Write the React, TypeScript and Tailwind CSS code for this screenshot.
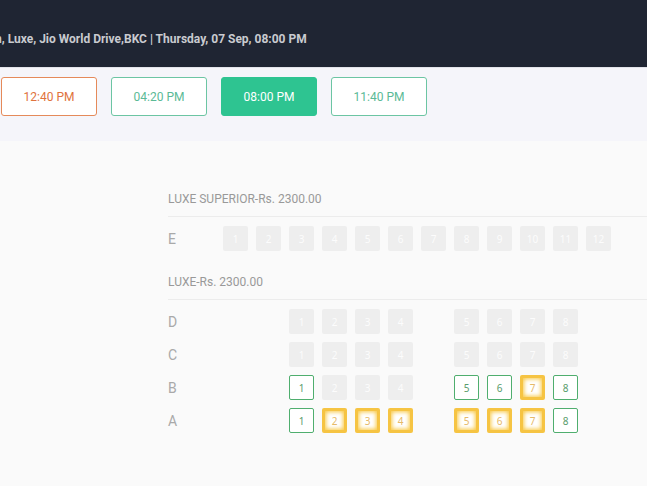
import { useState } from "react";

type Status = "sold" | "open" | "best";
type Seat = { n: number; col: number; status: Status };
type Row = { name: string; seats: Seat[] };
type Section = { title: string; rows: Row[] };

const wideRow = (name: string): Row => ({
  name,
  seats: Array.from({ length: 12 }, (_, i) => ({ n: i + 1, col: i, status: "sold" as Status })),
});

// Eight seats split by an aisle; one status letter for each seat.
const splitRow = (name: string, codes: string): Row => ({
  name,
  seats: codes.split("").map((c, i) => ({
    n: i + 1,
    col: i < 4 ? i + 2 : i + 3,
    status: c === "o" ? "open" : c === "b" ? "best" : "sold",
  })),
});

const sections: Section[] = [
  { title: "LUXE SUPERIOR-Rs. 2300.00", rows: [wideRow("E")] },
  {
    title: "LUXE-Rs. 2300.00",
    rows: [
      splitRow("D", "ssssssss"),
      splitRow("C", "ssssssss"),
      splitRow("B", "osssoobo"),
      splitRow("A", "obbbbbbo"),
    ],
  },
];

const seatStyles: Record<Status, string> = {
  sold: "bg-[#eeeeee] text-[#fcfcfc]",
  open: "border border-[#4fae6e] bg-white text-[#5a9c6c]",
  best: "border-[3px] border-[#f6c443] bg-white text-[#e6b968] shadow-[inset_0_0_4px_1px_#f8c740]",
};

const shows = [
  { time: "12:40 PM", tone: "border-[#e58a5a] text-[#e0733d]" },
  { time: "04:20 PM", tone: "border-[#6cc5a3] text-[#5bba96]" },
  { time: "08:00 PM", tone: "border-[#6cc5a3] text-[#5bba96]" },
  { time: "11:40 PM", tone: "border-[#6cc5a3] text-[#5bba96]" },
];

function SeatRow({ row }: { row: Row }) {
  const cells = Array.from({ length: 12 }, (_, c) => row.seats.find((s) => s.col === c));
  return (
    <div className="flex h-[25px] items-center">
      <span className="w-[55px] shrink-0 text-sm text-[#a9a9a9]">{row.name}</span>
      <div className="flex shrink-0 gap-2">
        {cells.map((s, c) =>
          s ? (
            <button
              key={c}
              type="button"
              disabled={s.status === "sold"}
              aria-label={`Seat ${row.name}${s.n}`}
              className={`flex size-[25px] items-center justify-center rounded-[2px] font-['Noto_Sans','Roboto',sans-serif] text-[10px] leading-none ${seatStyles[s.status]}`}
            >
              {s.n}
            </button>
          ) : (
            <span key={c} className="size-[25px]" />
          ),
        )}
      </div>
    </div>
  );
}

export default function App() {
  const [active, setActive] = useState("08:00 PM");
  return (
    <div className="min-h-screen overflow-hidden bg-[#fafafa] font-['Roboto','Liberation_Sans',sans-serif]">
      <header className="flex h-[67px] items-center bg-[#1f2533] pt-2.5">
        <h1 className="-ml-[5px] whitespace-nowrap text-xs font-bold text-[#c9cbd0]">
          n, Luxe, Jio World Drive,BKC | Thursday, 07 Sep, {active}
        </h1>
      </header>

      <nav className="flex gap-3.5 border-t border-[#e2e3ea] bg-[#f5f5fa] pt-[9px] pb-[25px] pl-px">
        {shows.map((s) => (
          <button
            key={s.time}
            type="button"
            onClick={() => setActive(s.time)}
            className={`h-[39px] w-24 shrink-0 rounded-[3px] border text-xs ${
              s.time === active ? "border-[#2ec491] bg-[#2ec491] text-white" : `bg-white ${s.tone}`
            }`}
          >
            {s.time}
          </button>
        ))}
      </nav>

      <main className="flex flex-col gap-[23px] pt-[50px] pl-[168px]">
        {sections.map((sec) => (
          <section key={sec.title}>
            <h2 className="border-b border-[#ececec] pb-[9px] text-xs text-[#999999]">{sec.title}</h2>
            <div className="flex flex-col gap-2 pt-[9px]">
              {sec.rows.map((r) => (
                <SeatRow key={r.name} row={r} />
              ))}
            </div>
          </section>
        ))}
      </main>
    </div>
  );
}
